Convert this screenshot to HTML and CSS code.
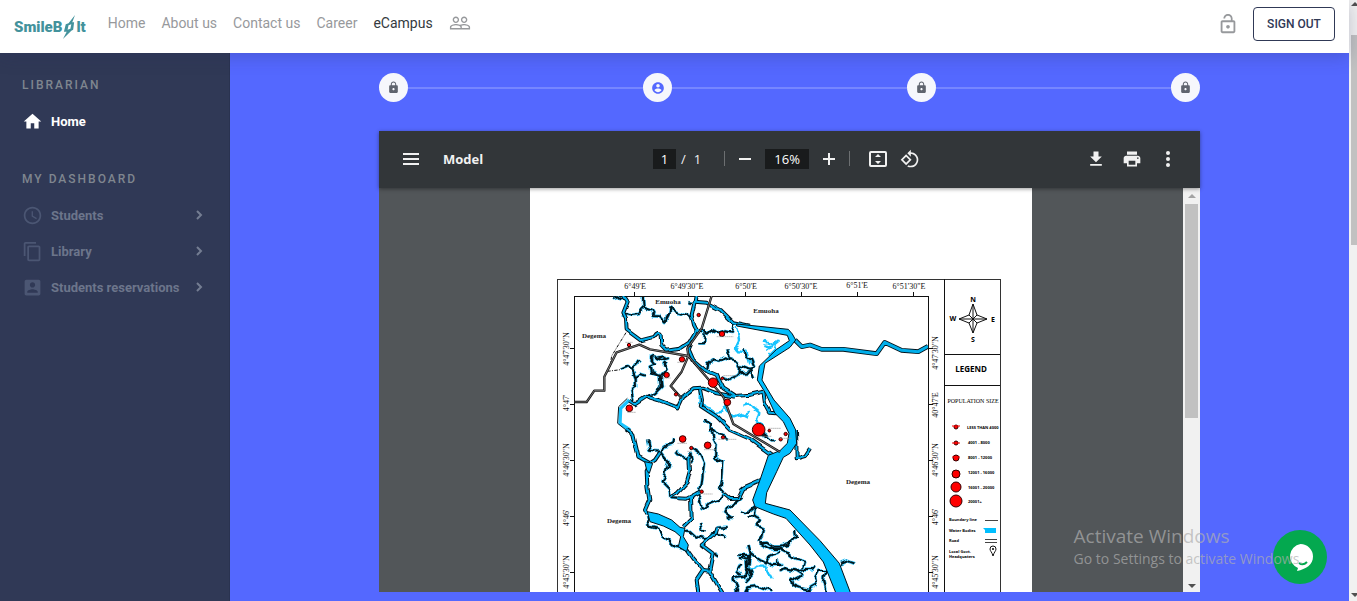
FILE: index.html
```html
<!DOCTYPE html>
<html lang="en">
<head>
<meta charset="utf-8">
<title>SmileBolt eCampus</title>
<link rel="stylesheet" href="styles.css">
</head>
<body>
<div class="window">
<div class="app">
  <header class="topbar">
    <a class="logo" href="#" aria-label="SmileBolt"><span>SmileB</span><svg class="logo-bolt" viewBox="0 0 15 28"><path d="M14 1 7 10 4 11 2 19 5 19 1 27 10 18 12 17 13 9 11 9zM7 12 10 11 9 16 6 17z" fill-rule="evenodd"/></svg><span>lt</span></a>
    <nav class="nav">
      <a href="#">Home</a>
      <a href="#">About us</a>
      <a href="#">Contact us</a>
      <a href="#">Career</a>
      <a href="#" class="current">eCampus</a>
      <a href="#" class="nav-icon" aria-label="People"><svg viewBox="0 0 24 24"><path d="M16.5 13c-1.2 0-3.07.34-4.5 1-1.43-.67-3.3-1-4.5-1C5.33 13 1 14.08 1 16.25V19h22v-2.75c0-2.17-4.33-3.25-6.5-3.25zm-4 4.5h-10v-1.25c0-.54 2.56-1.75 5-1.75s5 1.21 5 1.75v1.25zm9 0H14v-1.25c0-.46-.2-.86-.52-1.22.88-.3 1.96-.53 3.02-.53 2.44 0 5 1.21 5 1.75v1.25zM7.5 12c1.93 0 3.5-1.57 3.5-3.5S9.43 5 7.5 5 4 6.57 4 8.5 5.57 12 7.5 12zm0-5.5c1.1 0 2 .9 2 2s-.9 2-2 2-2-.9-2-2 .9-2 2-2zm9 5.5c1.93 0 3.5-1.57 3.5-3.5S18.43 5 16.5 5 13 6.57 13 8.5s1.57 3.5 3.5 3.5zm0-5.5c1.1 0 2 .9 2 2s-.9 2-2 2-2-.9-2-2 .9-2 2-2z"/></svg></a>
    </nav>
    <div class="account">
      <svg class="unlock" viewBox="0 0 24 24"><path d="M12 17c1.1 0 2-.9 2-2s-.9-2-2-2-2 .9-2 2 .9 2 2 2zm6-9h-1V6c0-2.76-2.24-5-5-5S7 3.24 7 6h1.9c0-1.71 1.39-3.1 3.1-3.1 1.71 0 3.1 1.39 3.1 3.1v2H6c-1.1 0-2 .9-2 2v10c0 1.1.9 2 2 2h12c1.1 0 2-.9 2-2V10c0-1.1-.9-2-2-2zm0 12H6V10h12v10z"/></svg>
      <button class="signout" type="button">SIGN OUT</button>
    </div>
  </header>

  <div class="body">
    <aside class="sidebar">
      <h2>LIBRARIAN</h2>
      <a class="item active" href="#"><svg viewBox="0 0 24 24"><path d="M10 20v-6h4v6h5v-8h3L12 3 2 12h3v8z"/></svg><span>Home</span></a>
      <h2 class="second">MY DASHBOARD</h2>
      <a class="item" href="#"><svg viewBox="0 0 24 24"><path d="M11.99 2C6.47 2 2 6.48 2 12s4.47 10 9.99 10C17.52 22 22 17.52 22 12S17.52 2 11.99 2zM12 20c-4.42 0-8-3.58-8-8s3.58-8 8-8 8 3.58 8 8-3.58 8-8 8zm.5-13H11v6l5.25 3.15.75-1.23-4.5-2.67z"/></svg><span>Students</span><svg class="chev" viewBox="0 0 8 10"><path d="M2 1 6 5 2 9"/></svg></a>
      <a class="item" href="#"><svg viewBox="0 0 24 24"><path d="M16 1H4c-1.1 0-2 .9-2 2v14h2V3h12V1zm3 4H8c-1.1 0-2 .9-2 2v14c0 1.1.9 2 2 2h11c1.1 0 2-.9 2-2V7c0-1.1-.9-2-2-2zm0 16H8V7h11v14z"/></svg><span>Library</span><svg class="chev" viewBox="0 0 8 10"><path d="M2 1 6 5 2 9"/></svg></a>
      <a class="item" href="#"><svg viewBox="0 0 24 24"><path d="M3 5v14c0 1.1.89 2 2 2h14c1.1 0 2-.9 2-2V5c0-1.1-.9-2-2-2H5c-1.11 0-2 .9-2 2zm12 4c0 1.66-1.34 3-3 3s-3-1.34-3-3 1.34-3 3-3 3 1.34 3 3zm-9 8c0-2 4-3.1 6-3.1s6 1.1 6 3.1v1H6v-1z"/></svg><span>Students reservations</span><svg class="chev" viewBox="0 0 8 10"><path d="M2 1 6 5 2 9"/></svg></a>
    </aside>

    <main class="content">
      <svg class="defs" width="0" height="0"><defs>
        <symbol id="lock" viewBox="0 0 24 24"><path d="M18 8h-1V6c0-2.76-2.24-5-5-5S7 3.24 7 6v2H6c-1.1 0-2 .9-2 2v10c0 1.1.9 2 2 2h12c1.1 0 2-.9 2-2V10c0-1.1-.9-2-2-2zm-6 9c-1.1 0-2-.9-2-2s.9-2 2-2 2 .9 2 2-.9 2-2 2zm3.1-9H8.9V6c0-1.71 1.39-3.1 3.1-3.1 1.71 0 3.1 1.39 3.1 3.1v2z"/></symbol>
      </defs></svg>
      <div class="steps">
        <span class="step"><svg><use href="#lock"/></svg></span><i></i>
        <span class="step on"><svg viewBox="0 0 24 24"><path d="M12 2C6.48 2 2 6.48 2 12s4.48 10 10 10 10-4.48 10-10S17.52 2 12 2zm0 3c1.66 0 3 1.34 3 3s-1.34 3-3 3-3-1.34-3-3 1.34-3 3-3zm0 14.2c-2.5 0-4.71-1.28-6-3.22.03-1.99 4-3.08 6-3.08 1.99 0 5.97 1.09 6 3.08-1.29 1.94-3.5 3.22-6 3.22z"/></svg></span><i></i>
        <span class="step"><svg><use href="#lock"/></svg></span><i></i>
        <span class="step"><svg><use href="#lock"/></svg></span>
      </div>

      <section class="viewer">
        <div class="toolbar">
          <div class="tools-left">
            <button class="tool" type="button" aria-label="Menu"><svg viewBox="0 0 20 20"><path d="M2 4h16v2H2zm0 5h16v2H2zm0 5h16v2H2z"/></svg></button>
            <span class="doc-title">Model</span>
          </div>
          <div class="tools-mid">
            <input class="field page-no" aria-label="Page number" value="1"><span class="slash">/</span><span class="total">1</span>
            <b class="rule"></b>
            <button class="tool" type="button" aria-label="Zoom out"><svg viewBox="0 0 20 20"><path d="M4 9h12v2H4z"/></svg></button>
            <input class="field zoom" aria-label="Zoom level" value="16%">
            <button class="tool" type="button" aria-label="Zoom in"><svg viewBox="0 0 20 20"><path d="M4 9h5V4h2v5h5v2h-5v5H9v-5H4z"/></svg></button>
            <b class="rule"></b>
            <button class="tool fit" type="button" aria-label="Fit to page"><svg viewBox="0 0 20 20"><path fill-rule="evenodd" d="M3 2h14a2 2 0 0 1 2 2v12a2 2 0 0 1-2 2H3a2 2 0 0 1-2-2V4a2 2 0 0 1 2-2zm0 2v12h14V4zM10 5l3 3H7zm0 10 3-3H7z"/></svg></button>
            <button class="tool" type="button" aria-label="Rotate"><svg viewBox="0 0 24 24"><path d="M7.34 6.41L.86 12.9l6.49 6.48 6.49-6.48-6.5-6.49zM3.69 12.9l3.66-3.66L11 12.9l-3.66 3.66-3.65-3.66zm15.67-6.26C17.61 4.88 15.3 4 13 4V.76L8.76 5 13 9.24V6c1.79 0 3.58.68 4.95 2.05 2.73 2.73 2.73 7.17 0 9.9C16.58 19.32 14.79 20 13 20c-.97 0-1.94-.21-2.84-.61l-1.49 1.49C10.02 21.62 11.51 22 13 22c2.3 0 4.61-.88 6.36-2.64 3.52-3.51 3.52-9.21 0-12.72z"/></svg></button>
          </div>
          <div class="tools-right">
            <button class="tool" type="button" aria-label="Download"><svg viewBox="0 0 24 24"><path d="M19 9h-4V3H9v6H5l7 7 7-7zM5 18v2h14v-2H5z"/></svg></button>
            <button class="tool" type="button" aria-label="Print"><svg viewBox="0 0 24 24"><path d="M19 8H5c-1.66 0-3 1.34-3 3v6h4v4h12v-4h4v-6c0-1.66-1.34-3-3-3zm-3 11H8v-5h8v5zm3-7c-.55 0-1-.45-1-1s.45-1 1-1 1 .45 1 1-.45 1-1 1zm-1-9H6v4h12V3z"/></svg></button>
            <button class="tool" type="button" aria-label="More"><svg viewBox="0 0 20 20"><circle cx="10" cy="4" r="2"/><circle cx="10" cy="10" r="2"/><circle cx="10" cy="16" r="2"/></svg></button>
          </div>
        </div>
        <div class="canvas">
          <div class="scroll-area">
            <div class="sheet">
<svg class="map" viewBox="530 188 502 404" role="img" aria-label="Population map">
<defs>
  <clipPath id="frame"><path d="M574 296h354v300H574z"/></clipPath>
  <filter id="meander" filterUnits="userSpaceOnUse" x="0" y="0" width="1200" height="1000"><feTurbulence type="fractalNoise" baseFrequency="0.045" numOctaves="1" seed="4"/><feDisplacementMap in="SourceGraphic" scale="24" xChannelSelector="R" yChannelSelector="G"/></filter>
  <filter id="bank" filterUnits="userSpaceOnUse" x="0" y="0" width="1200" height="1000"><feTurbulence type="fractalNoise" baseFrequency="0.03" numOctaves="1" seed="9"/><feDisplacementMap in="SourceGraphic" scale="12" xChannelSelector="R" yChannelSelector="G"/></filter>
  <g id="rivers">
    <path d="M222 78 233 95 220 128 228 145 230 180 272 211 312 201Q325 180 332 195L334 225 350 242 388 236 420 215 440 182 462 183"/>
    <path d="M437 78 433 100 425 135 432 165 445 190"/>
    <path d="M435 95 470 98 512 120 550 157 600 167"/>
    <path d="M424 220 416 238 430 270 465 300 500 315 520 355 555 378 600 374 640 365"/>
    <path d="M238 392 255 403 290 380 325 390 382 412 396 382 430 355 456 353 500 370 555 380"/>
    <path d="M450 358 456 390 452 408 500 440 540 480 600 507 672 560"/>
    <path d="M640 365 645 400 660 428 678 430"/>
    <path d="M570 662 582 652 632 630"/>
    <path d="M228 478 250 495 258 530 265 560 300 580 315 570 330 548"/>
    <path d="M300 580 290 600 292 650 298 690 285 720 292 735"/>
    <path d="M423 680 425 745 400 770"/>
    <path d="M360 682 382 670 410 640 420 605 418 560"/>
    <path d="M385 685 410 686 450 665"/>
    <path d="M405 830 430 865 460 900 440 930 445 970"/>
    <path d="M460 900 478 902 500 940 518 970"/>
    <path d="M478 902 488 850 455 825 492 795 500 773"/>
    <path d="M518 668 540 687 565 686 580 655 605 645"/>
    <path d="M738 480 740 565 765 558 780 535"/>
  </g>
  <path id="east" d="M735 210 755 230 780 225 815 238 880 238 980 251 1004 217 1055 241 1105 245 1134 229"/>
  <g id="creeks">
    <path d="M190 76 205 87 222 80M218 132 240 136 267 132 281 112 279 84M281 112 303 122 311 135 328 136 345 155 359 128 361 115 382 127 408 136 422 145M415 100 426 102"/>
    <path d="M444 190 462 183 476 194 493 179 508 190 525 184 543 188 550 155"/>
    <path d="M445 220 462 220 464 190M472 300 475 280 490 268 510 272 521 265 541 270 560 276 570 292 568 315 551 325M541 270 535 250 532 235M515 320 540 330 560 318M570 310 605 306 612 325"/>
    <path d="M250 395 244 362 258 350 257 324 247 300 230 291 212 299M247 300 255 285 266 270M258 324 272 315 288 320"/>
    <path d="M290 382 315 370 335 350 332 318 303 308 299 287 315 280 303 265 316 258M332 318 350 295 341 282 347 274"/>
    <path d="M320 264 335 270 354 265 342 259z"/>
    <path d="M465 450 480 461 479 478 493 480 505 493 528 500 535 510"/>
    <path d="M292 508 299 542 330 545M330 545 345 530 367 523 370 503M370 540 385 556 405 562 422 553 427 580"/>
    <path d="M330 545 355 575 347 610 338 635 358 655 362 682 385 683"/>
    <path d="M427 535 447 548 462 580 455 640 450 665"/>
    <path d="M486 480 490 505 500 525 498 565 520 575 517 630 511 653 520 665"/>
    <path d="M438 665 450 690 455 710 467 716 482 700 510 690 520 668"/>
    <path d="M292 735 300 770 322 776 340 800 360 815 375 830 407 840"/>
    <path d="M402 785 420 786 436 800 466 808 495 790M450 765 455 780 466 787M495 790 520 795 528 810M492 850 508 860M500 773 530 771"/>
    <path d="M575 685 555 702 530 712 523 725 550 745M545 742 530 745"/>
    <path d="M570 720 590 730 612 712M600 860 592 890 605 920 590 935"/>
    <path d="M550 925 562 965M550 925 590 920 600 855 565 855M575 880 560 905 575 915"/>
    <path d="M615 712 612 735 630 745 620 765 640 775 635 800 625 815M612 735 600 745"/>
    <path d="M735 780 738 800 715 822 690 830 668 830 650 818 628 820"/>
    <path d="M570 860 592 866 602 850 630 870 645 880 655 860 690 845M602 850 595 825M630 820 660 837 690 837 715 850 735 865 765 875 760 895"/>
    <path d="M590 870 592 900 585 920 570 920M645 870 665 885 690 885 680 870"/>
    <path d="M690 905 705 895 740 902 760 897M740 902 760 915 745 930 725 920 730 945 755 955 775 960 800 945 795 920 805 900 830 900 822 930 830 965M760 900 780 900 795 890"/>
    <path d="M585 965 592 952 625 948 670 965M870 880 890 872 915 881"/>
    <path d="M580 235 590 260 604 270 612 290 600 300 570 288M640 490 670 515"/>
  </g>
  <g id="roads">
    <path d="M74 396H110L133 362H163V320L200 247 268 224 300 238 415 258 520 380 550 462 690 546"/>
    <path d="M485 78 455 175 412 235 415 258 395 305 362 348 395 385"/>
  </g>
  <g id="rose"><path d="M973 304 977 315 987 319 977 323 973 333 969 323 959 319 969 315zM973 304V333M959 319H987M969 315 977 323M977 315 969 323"/></g>
</defs>
<g class="axes">
  <path class="outer" d="M557 600V279H1000V600"/>
  <path class="inner" d="M574 600V296H928V600"/>
  <path d="M944 279V600M944 354H1000M944 385H1000"/>
  <path d="M634 292v4M688 292v4M745 292v4M801 292v4M857 292v4M913 292v4M570 348h4M570 404h4M570 460h4M570 516h4M570 572h4M928 348h5M928 404h5M928 460h5M928 516h5M928 572h5"/>
</g>
<g clip-path="url(#frame)">
<g transform="translate(550 270) scale(.333333)" fill="none" stroke-linejoin="round">
  <path class="boundary" d="M228 188 205 225 185 258 180 290M172 304 212 299"/>
  <g filter="url(#meander)">
    <path class="wash" d="M560 165 570 210 555 240 590 245 600 280M640 225 665 232 680 212 675 240 660 255M645 215 670 225 650 240M450 358 448 400 500 430 515 425 530 400M530 400 525 420 550 440 575 430 595 440M580 410 600 405 625 425 618 450 640 470M570 440 600 425M600 900 620 890 650 890 655 905 665 925"/>
    <g class="creek-glow"><use href="#creeks"/></g>
    <g class="creek-line"><use href="#creeks"/></g>
  </g>
  <path class="wash wide" d="M238 390 212 415 210 460 240 480"/>
  <path class="edge-fine" d="M232 385 206 410 203 460 228 480 250 500M458 390 460 410 505 445"/>
  <g filter="url(#bank)">
    <g class="river-edge"><use href="#rivers"/></g>
    <g class="river-water"><use href="#rivers"/></g>
  </g>
  <g class="river-edge east"><use href="#east"/></g>
  <g class="river-water east"><use href="#east"/></g>
  <path class="main-river" d="M560 162 715 178Q728 190 737 210L720 232 645 280 636 330 672 390 720 445 737 480 740 520 720 550 700 562 680 605 650 668 646 700 720 720 810 812 868 880 902 970H858L820 876 780 825 708 745 670 732 615 710 608 690 630 630 655 556 690 542 712 520 717 490 700 455 675 430 648 372 622 330 628 288 680 238 718 212 712 196 560 168z"/>
  <path class="main-river" d="M292 725 325 732 365 750 390 772 405 775 400 800 415 825 410 845 385 830 392 800 375 785 340 768 300 755z"/>
  <path class="main-river" d="M284 575 308 580 298 610 290 600z"/>
  <g class="road-edge"><use href="#roads"/></g>
  <g class="road-fill"><use href="#roads"/></g>
  <g class="towns">
    <circle cx="446" cy="135" r="5"/><circle cx="516" cy="192" r="8"/><circle cx="237" cy="225" r="5"/><circle cx="396" cy="268" r="8"/><circle cx="350" cy="315" r="8"/><circle cx="517" cy="325" r="4"/><circle cx="489" cy="338" r="14"/><circle cx="378" cy="373" r="5"/><circle cx="238" cy="415" r="10"/><circle cx="532" cy="397" r="10"/><circle cx="398" cy="507" r="10"/><circle cx="473" cy="526" r="10"/><circle cx="424" cy="534" r="5"/><circle cx="519" cy="502" r="5"/><circle cx="455" cy="665" r="5"/><circle cx="626" cy="479" r="19"/><circle cx="658" cy="482" r="4"/><circle cx="707" cy="492" r="5"/><circle cx="692" cy="508" r="5"/>
  </g>
  <path class="town-names" d="M500 200h50M382 277h24M336 324h26M520 317h40M232 427h26M382 520h30M462 539h38M505 508h55M460 672h28M655 475h38M690 505h35M630 499h34M412 544h14M226 217h22"/>
</g>
</g>
<g class="axis-text">
  <text x="635" y="289">6°49'E</text><text x="687" y="289">6°49'30"E</text><text x="746" y="289">6°50'E</text><text x="801" y="289">6°50'30"E</text><text x="857" y="288">6°51'E</text><text x="909" y="289">6°51'30"E</text>
  <text transform="translate(569 349) rotate(-90)">4°47'30"N</text><text transform="translate(569 403) rotate(-90)">4°47'</text><text transform="translate(569 460) rotate(-90)">4°46'30"N</text><text transform="translate(569 518) rotate(-90)">4°46'</text><text transform="translate(569 572) rotate(-90)">4°45'30"N</text>
  <text transform="translate(938 353) rotate(-90)">4°47'30"N</text><text transform="translate(938 405) rotate(-90)">40°47'E</text><text transform="translate(938 460) rotate(-90)">4°46'30"N</text><text transform="translate(938 517) rotate(-90)">4°46'</text><text transform="translate(938 572) rotate(-90)">4°45'30"N</text>
</g>
<g class="place"><text x="668" y="304">Emuoha</text><text x="766" y="313">Emuoha</text><text x="594" y="338">Degema</text><text x="619" y="523">Degema</text><text x="858" y="484">Degema</text></g>
<g class="rose"><use href="#rose"/></g>
<g class="rose-text"><text x="973" y="302">N</text><text x="953" y="321">W</text><text x="993" y="322">E</text><text x="973" y="342">S</text></g>
<text class="legend-title" x="971" y="372">LEGEND</text>
<text class="legend-sub" x="973" y="403">POPULATION  SIZE</text>
<g class="legend-dots"><circle cx="956" cy="427" r="2"/><circle cx="956" cy="443" r="2"/><circle cx="956" cy="458" r="3"/><circle cx="956" cy="474" r="4"/><circle cx="956" cy="487" r="5"/><circle cx="956" cy="501" r="6"/><path d="M952 426h8M952 443h8M952 457h8"/></g>
<g class="legend-text"><text x="967" y="429">LESS THAN 4000</text><text x="968" y="444">4001 - 8000</text><text x="968" y="459">8001 - 12000</text><text x="968" y="474">12001 - 16000</text><text x="968" y="489">16001 - 20000</text><text x="968" y="503">20001+</text><text x="949" y="521">Boundary line</text><text x="949" y="532">Water Bodies</text><text x="949" y="542">Road</text><text x="949" y="553">Local Govt.</text><text x="949" y="558">Headquaters</text></g>
<path class="key-line" d="M985 520h13M985 539h12M985 542h12"/>
<path class="key-water" d="M983 528h13v5h3l-14 0v-3z"/>
<path class="key-pin" d="M993 556C992 552 990 551 990 549a3 3 0 0 1 6 0C996 551 994 552 993 556z"/><circle cx="993" cy="549" r="1"/>
</svg>
            </div>
          </div>
          <div class="track"><i class="up"></i><i class="thumb"></i><i class="down"></i></div>
        </div>
      </section>
    </main>
  </div>
</div>
<div class="page-track"><i class="up"></i><i class="page-thumb"></i><i class="down"></i></div>
<button class="chat" type="button" aria-label="Chat"><svg viewBox="0 0 54 54"><path d="M27.5 14A12.500 12.500 0 0 1 40 26.500C40 35 33 39 24 41l1-3A12.500 12.500 0 0 1 27.500 14z" fill="#fff"/><path d="M26 33q4 3 8-1" fill="none" stroke="#04a84f" stroke-width="2"/></svg></button>
<div class="watermark"><strong>Activate Windows</strong><span>Go to Settings to activate Windows.</span></div>
</div>
</body>
</html>
```
FILE: styles.css
```css
* { box-sizing: border-box; }
body { margin: 0; font-family: Roboto, "Liberation Sans", sans-serif; background: #5468ff; }
a { text-decoration: none; color: inherit; }
button { font: inherit; padding: 0; border: 0; background: none; cursor: pointer; }
svg { display: block; }

.window { position: relative; display: flex; height: 100vh; overflow: hidden; }
.app { flex: 1; min-width: 0; display: flex; flex-direction: column; }

.topbar { position: relative; z-index: 2; display: flex; align-items: center; min-height: 53px; padding: 0 14px; background: #fff; box-shadow: 0 4px 16px rgba(40, 45, 90, .25); }
.logo { display: flex; align-items: center; color: #43929c; font-size: 15px; font-weight: 900; line-height: 28px; }
.logo-bolt { width: 14px; height: 26px; fill: #43929c; }
.nav { display: flex; align-items: center; gap: 16px; margin-left: 22px; padding-bottom: 8px; font-size: 14px; line-height: 20px; color: #97999c; }
.nav .current { color: #343a40; }
.nav-icon svg { width: 22px; height: 22px; fill: #97999c; }
.account { display: flex; align-items: center; gap: 14px; margin-left: auto; padding-bottom: 5px; }
.unlock { width: 22px; height: 22px; fill: #97999c; }
.signout { width: 82px; height: 34px; border: 1px solid #303956; border-radius: 4px; color: #303956; font-size: 12px; font-weight: 500; }

.body { flex: 1; min-height: 0; display: flex; }
.sidebar { flex: 0 0 230px; padding: 24px 22px; background: #303956; border-right: 1px solid #2a3350; color: #747d92; }
.sidebar h2 { margin: 0 0 10px; font-size: 12px; font-weight: 500; line-height: 16px; letter-spacing: 2px; color: #7f868f; }
.sidebar .second { margin-top: 32px; }
.item { display: flex; align-items: center; gap: 8px; height: 36px; font-size: 13px; font-weight: 700; white-space: nowrap; color: #6c758b; }
.item svg { width: 21px; height: 21px; fill: #4b5673; }
.item.active { color: #fff; }
.item.active svg { fill: #fff; }
.item .chev { width: 8px; height: 10px; margin-left: auto; margin-right: 4px; fill: none; stroke: #747d92; stroke-width: 2; }

.content { flex: 1; min-width: 0; display: flex; flex-direction: column; padding: 20px 149px 9px; background: #5468ff; }
.defs { position: absolute; }
.steps { display: flex; align-items: center; margin-bottom: 29px; }
.steps i { flex: 1; height: 2px; background: #7686ff; }
.step { display: grid; place-items: center; width: 29px; height: 29px; border-radius: 50%; background: #f6f7fc; }
.step svg { width: 13px; height: 13px; fill: #5f646e; }
.step.on svg { width: 14px; height: 14px; fill: #5468ff; }

.viewer { flex: 1; min-height: 0; display: flex; flex-direction: column; }
.toolbar { position: relative; z-index: 1; display: grid; grid-template-columns: 1fr auto 1fr; align-items: center; height: 57px; padding: 0 22px 2px; background: #323639; color: #f1f1f1; font-family: "Open Sans", "Noto Sans", sans-serif; font-size: 13px; box-shadow: 0 1px 4px rgba(0, 0, 0, .4); }
.tools-left, .tools-mid, .tools-right { display: flex; align-items: center; }
.tools-left { gap: 22px; }
.tools-mid { margin-right: 6px; }
.tools-right { gap: 16px; justify-content: flex-end; }
.tool { width: 20px; height: 20px; }
.tool svg { width: 20px; height: 20px; fill: #f1f1f1; }
.doc-title { font-weight: 700; }
.field { height: 20px; padding: 0; border: 0; background: #191b1c; color: #fff; font: inherit; text-align: center; }
.page-no { width: 23px; }
.slash { margin-left: 5px; }
.total { margin-left: 8px; }
.zoom { width: 44px; margin: 0 10px; }
.rule { width: 1px; height: 15px; margin: 0 10px; background: #6c6f71; }
.total + .rule { margin-left: 23px; }
.fit { margin: 0 12px 0 8px; }

.canvas { flex: 1; min-height: 0; display: flex; background: #525659; }
.scroll-area { flex: 1; min-width: 0; display: flex; justify-content: center; overflow: hidden; }
.sheet { flex: 0 1 502px; background: #fff; }
.map { width: 100%; }
.track { display: flex; flex-direction: column; align-items: center; width: 17px; background: #f1f1f1; }
.up, .down { border: 4px solid transparent; }
.up { margin-top: 2px; border-bottom-color: #a3a3a3; }
.down { margin: auto 0 0; border-top-color: #505050; }
.track .thumb { width: 13px; height: 53%; margin-top: 6px; background: #c1c1c1; }
.page-track { display: flex; flex-direction: column; align-items: flex-start; width: 8px; padding-left: 2px; background: #f1f1f1; overflow: hidden; }
.page-track .up { margin-top: -2px; border-bottom-color: #505050; }
.page-thumb { width: 6px; height: 35%; margin-top: 29px; background: #c1c1c1; }

.chat { position: absolute; right: 30px; bottom: 17px; width: 54px; height: 54px; border-radius: 50%; background: #04a84f; }
.watermark { position: absolute; right: 54px; bottom: 31px; z-index: 3; display: flex; flex-direction: column; color: rgba(175, 175, 175, .7); font-family: "Open Sans", "Noto Sans", sans-serif; font-size: 14px; line-height: 22px; pointer-events: none; }
.watermark strong { font-size: 19px; font-weight: 400; line-height: 24px; }

.axes { fill: none; stroke: #111; stroke-width: 1; shape-rendering: crispEdges; }
.axes .outer { stroke: #333; }
.axis-text { font: 8px "Liberation Serif", serif; text-anchor: middle; fill: #111; }
.place { font: bold 7px "Liberation Serif", serif; text-anchor: middle; fill: #222; }
.rose { fill: none; stroke: #111; stroke-width: 1; }
.rose-text { font: bold 7px "Open Sans", sans-serif; text-anchor: middle; }
.legend-title { font: bold 8px "Open Sans", sans-serif; text-anchor: middle; }
.legend-sub { font: 6px "Liberation Serif", serif; text-anchor: middle; }
.legend-text { font: bold 4px "Open Sans", sans-serif; }
.legend-dots { fill: #f00; stroke: #300; stroke-width: 1; }
.legend-dots path { stroke: #f00; }
.key-line { stroke: #444; stroke-width: 1; shape-rendering: crispEdges; }
.key-water { fill: #00bfff; }
.key-pin { fill: none; stroke: #111; stroke-width: 1; }
.boundary { stroke: #111; stroke-width: 3; stroke-dasharray: 10 4 3 4; }
.creek-glow { stroke: #4cf; stroke-width: 10; }
.creek-line { stroke: #00141c; stroke-width: 6; }
.river-edge { stroke: #001018; stroke-width: 12; }
.river-water { stroke: #00aeea; stroke-width: 6; }
.river-edge.east { stroke-width: 14; }
.river-water.east { stroke-width: 9; }
.wash { stroke: #19c4ff; stroke-width: 7; }
.wash.wide { stroke-width: 10; }
.edge-fine { stroke: #00141c; stroke-width: 3; }
.main-river { fill: #00bfff; stroke: #001018; stroke-width: 3; }
.road-edge { stroke: #111; stroke-width: 7; }
.road-fill { stroke: #aaa; stroke-width: 2; }
.towns { fill: #f00; stroke: #300; stroke-width: 3; }
.town-names { stroke: #999; stroke-width: 2; stroke-dasharray: 5 1; }
```
